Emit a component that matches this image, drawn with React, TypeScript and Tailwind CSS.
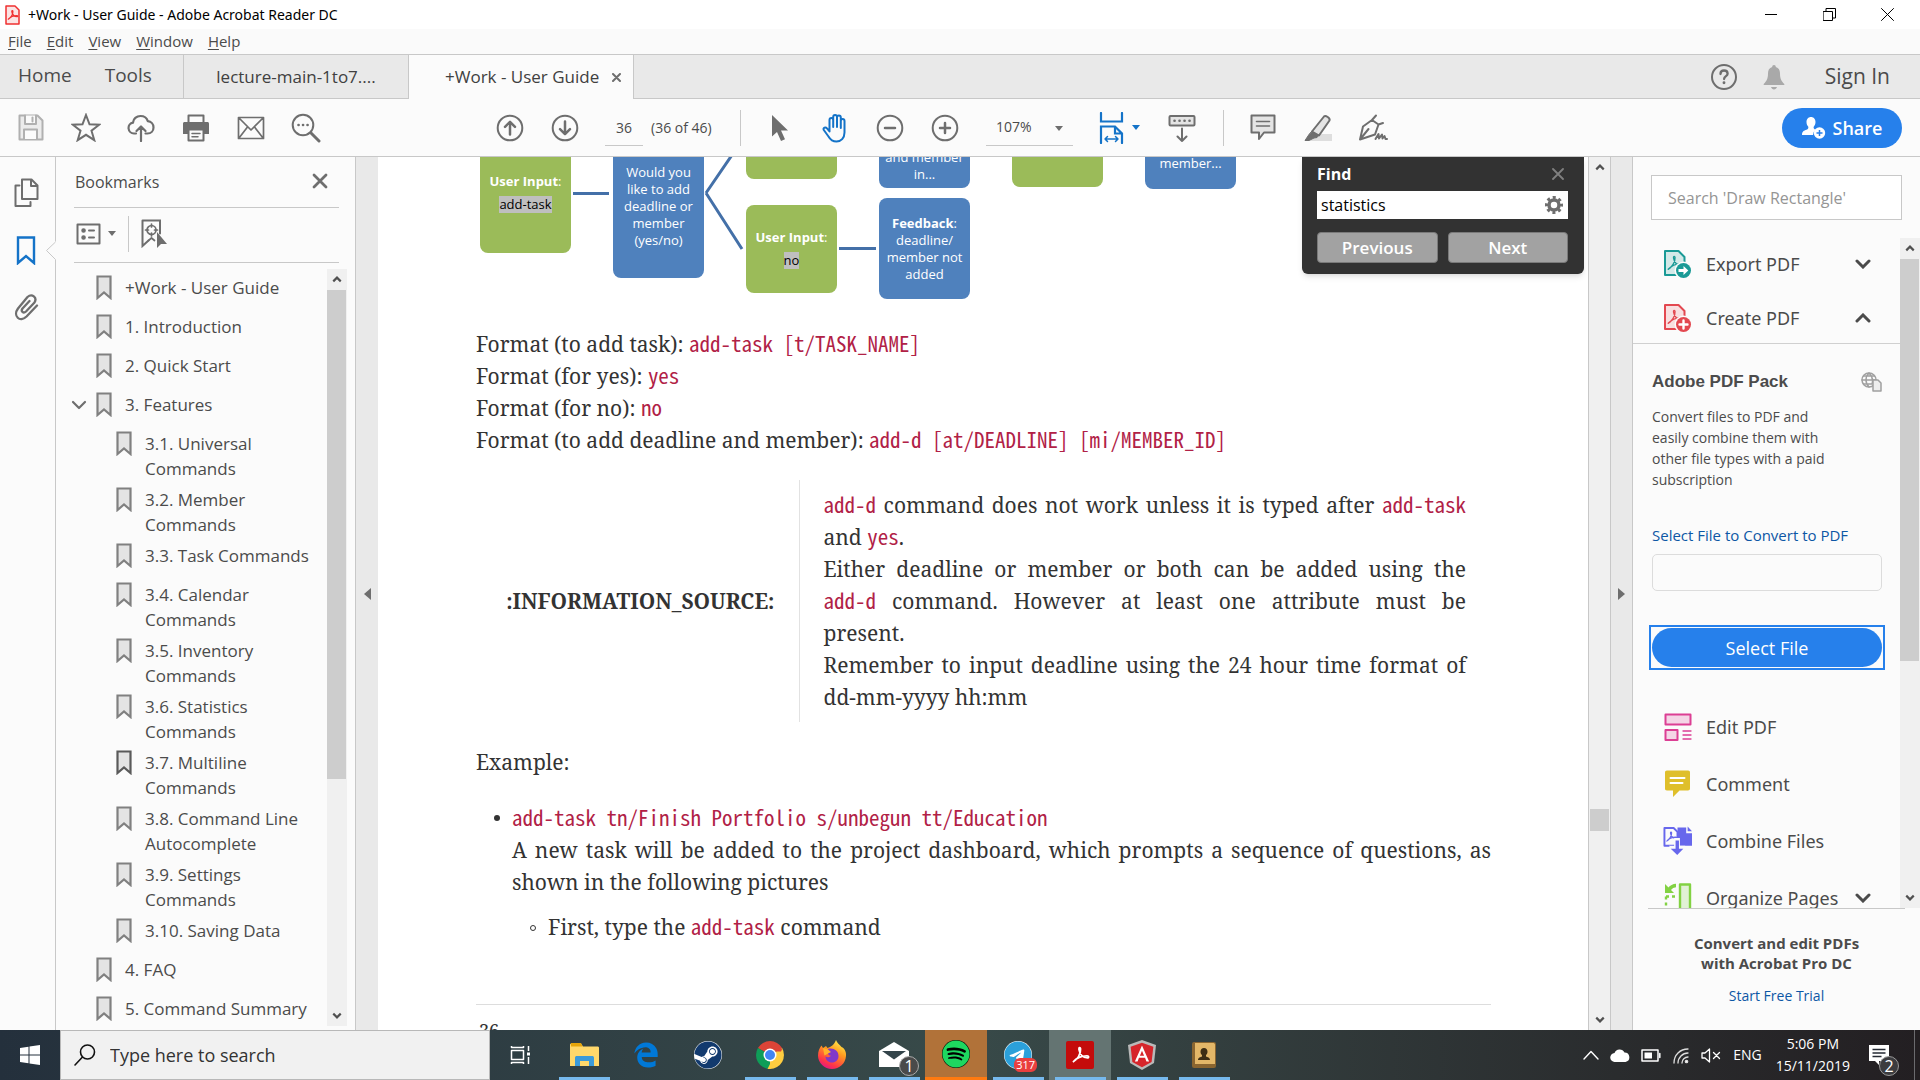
import React from "react";
import { FaAngular, FaEdgeLegacy, FaSpotify, FaSteam, FaTelegram } from "react-icons/fa6";

const G = "#6e6e6e";

type SvgProps = { w: number; h: number; children: React.ReactNode; stroke?: string; sw?: number; className?: string };
function Svg({ w, h, children, stroke = G, sw = 2, className }: SvgProps) {
  return (
    <svg width={w} height={h} viewBox={`0 0 ${w} ${h}`} fill="none" stroke={stroke} strokeWidth={sw} strokeLinejoin="round" strokeLinecap="round" className={className} aria-hidden="true">
      {children}
    </svg>
  );
}

const SWIRL = "M3 17c4-2 8-8 7.6-13-.2-2-2-1.6-1.7.4.8 4.8 4 8.2 8.6 8.4 1.6 0 1.6-1.9-.4-1.9C12 10.9 6.500 13 3 17z";

function Caret({ className = "text-[#6e6e6e]" }: { className?: string }) {
  return (
    <svg width="8" height="5" viewBox="0 0 8 5" fill="currentColor" className={className} aria-hidden="true">
      <path d="M0 0h8L4 5z" />
    </svg>
  );
}

function Chevron({ up = false, small = false }: { up?: boolean; small?: boolean }) {
  const d = up ? "M2 8l6-6 6 6" : "M2 2l6 6 6-6";
  return small ? (
    <svg width="10" height="7" viewBox="0 0 16 10" fill="none" stroke="#505050" strokeWidth="3.400" aria-hidden="true"><path d={d} /></svg>
  ) : (
    <svg width="16" height="10" viewBox="0 0 16 10" fill="none" stroke="#4b4b4b" strokeWidth="3" strokeLinecap="round" aria-hidden="true"><path d={d} /></svg>
  );
}

function IconButton({ label, children }: { label: string; children: React.ReactNode }) {
  return (
    <button aria-label={label} className="flex h-10 w-[55px] shrink-0 items-center justify-center">
      {children}
    </button>
  );
}

function TitleBar() {
  return (
    <header className="flex h-[29px] shrink-0 items-center bg-white">
      <Svg w={16} h={20} stroke="#f03030" sw={1.5} className="ml-1">
        <path d="M2 1h9l4 4v14H2z" fill="#fbe4e4" />
        <g transform="translate(2.5 4) scale(.6)"><path d={SWIRL} strokeWidth="2.200" /></g>
      </Svg>
      <h1 className="ml-2 font-['Noto_Sans'] text-sm text-black">+Work - User Guide - Adobe Acrobat Reader DC</h1>
      <div className="ml-auto flex items-center">
        <button aria-label="Minimize" className="flex h-7 w-[58px] items-center justify-center">
          <Svg w={12} h={12} stroke="#000" sw={1}><path d="M0 5.5h12" /></Svg>
        </button>
        <button aria-label="Restore" className="flex h-7 w-[58px] items-center justify-center">
          <Svg w={13} h={13} stroke="#000" sw={1}><path d="M.5 3.500h9v9h-9zM3 3V.5h9.500V10H10" /></Svg>
        </button>
        <button aria-label="Close" className="mr-1 flex h-7 w-[58px] items-center justify-center">
          <Svg w={13} h={13} stroke="#000" sw={1}><path d="M.5.5l12 12M12.500.5l-12 12" /></Svg>
        </button>
      </div>
    </header>
  );
}

function MenuBar() {
  return (
    <nav className="flex h-[25px] shrink-0 items-center gap-[15px] bg-[#fafafa] pl-2 text-[15px] text-[#4b4b4b]">
      {["File", "Edit", "View", "Window", "Help"].map((m) => (
        <button key={m}>
          <span className="underline underline-offset-2">{m[0]}</span>
          {m.slice(1)}
        </button>
      ))}
    </nav>
  );
}

function TabBar() {
  return (
    <div className="flex h-[45px] shrink-0 border-y border-[#c8c8c8] bg-[#e9e9e9] text-[#4b4b4b]">
      <div className="flex w-[184px] items-center gap-[33px] border-r border-[#c8c8c8] pl-[18px] pb-[2px] text-[19px]">
        <button>Home</button>
        <button>Tools</button>
      </div>
      <button className="w-[225px] border-r border-[#c8c8c8] text-[17px] text-[#404040]">lecture-main-1to7....</button>
      <div className="-mb-px flex w-[225px] items-center border-r border-[#c8c8c8] bg-[#fbfbfb] pl-9 text-[17px] text-[#404040]">
        <button className="whitespace-nowrap">+Work - User Guide</button>
        <button aria-label="Close tab" className="ml-auto mr-3">
          <Svg w={9} h={9} sw={2}><path d="M1 1l7 7M8 1L1 8" /></Svg>
        </button>
      </div>
      <div className="ml-auto flex items-center">
        <button aria-label="Help" className="mr-[25px]">
          <Svg w={28} h={28}>
            <circle cx="14" cy="14" r="12" />
            <path d="M10.500 11c0-2.200 1.500-3.500 3.500-3.500s3.600 1.200 3.600 3.200c0 2.300-3.500 2.500-3.500 5.300" strokeWidth="2.300" />
            <circle cx="14" cy="19.800" r=".7" strokeWidth="1.500" fill={G} />
          </Svg>
        </button>
        <button aria-label="Notifications" className="mr-10">
          <svg width="22" height="26" viewBox="0 0 22 26" fill="#a9a9a9" aria-hidden="true">
            <path d="M11 1c1.200 0 1.800.8 1.800 2 3 .8 4.200 3.300 4.200 6.500 0 5 1.300 7.500 4.300 10.500v1H.7v-1C3.700 17 5 14.500 5 9.500 5 6.300 6.200 3.800 9.200 3c0-1.200.6-2 1.800-2zM8 23h6c-.5 1.600-1.600 2.500-3 2.500S8.500 24.600 8 23z" />
          </svg>
        </button>
        <button className="mr-[30px] text-[21px]">Sign In</button>
      </div>
    </div>
  );
}

function Toolbar() {
  return (
    <div className="flex h-[58px] shrink-0 items-center border-b border-[#c8c8c8] bg-[#fbfbfb] pl-[3px] text-sm text-[#4b4b4b]">
      <IconButton label="Save">
        <Svg w={26} h={27} stroke="#b0b0b0"><path d="M1.500 1.500h18l5 5v19h-23z" fill="#ececec" /><path d="M7 1.500v8.500h11V1.500M6 25v-9.500h13V25" fill="#fbfbfb" /><path d="M14.500 3.500v4" /></Svg>
      </IconButton>
      <IconButton label="Star">
        <Svg w={30} h={29}><path d="M15 2l3.500 9.300 9.700.4-7.700 6 2.800 9.500L15 21.800l-8.300 5.400 2.800-9.500-7.700-6 9.700-.4z" strokeLinejoin="miter" /></Svg>
      </IconButton>
      <IconButton label="Upload to cloud">
        <Svg w={28} h={28} sw={2.200}><path d="M9 19.500H7a5.500 5.500 0 0 1-1-10.900C6.200 4.800 9.500 2 13.500 2c3.500 0 6.300 2 7.300 5.200 3.400.4 5.700 3 5.700 6.200 0 3.500-2.500 6.100-6 6.100h-2M14 27V13M9.500 17l4.500-4.500 4.500 4.500" /></Svg>
      </IconButton>
      <IconButton label="Print">
        <Svg w={28} h={28}><path d="M6.500 9V1.500h15V9" /><path d="M1 9.500c0-1 .8-1.500 1.500-1.500h23c.8 0 1.500.6 1.500 1.500V20H1z" fill={G} stroke="none" /><path d="M6.500 15.500h15v11h-15z" fill="#fbfbfb" /><path d="M10 19.500h8M10 22.800h6" strokeWidth="1.500" /></Svg>
      </IconButton>
      <IconButton label="Email">
        <Svg w={28} h={24}><path d="M1.500 1.500h25v21h-25zM2 2l12 12L26 2M2 22l8.500-11M26 22l-8.500-11" strokeWidth="1.700" /></Svg>
      </IconButton>
      <IconButton label="Find">
        <Svg w={30} h={30}><circle cx="12" cy="12" r="10.300" /><path d="M20 20l8 8" strokeWidth="3" /><path d="M7.500 12h.1M12 12h.1M16.500 12h.1" strokeWidth="2.600" /></Svg>
      </IconButton>
      <div className="ml-[149px] flex">
        <IconButton label="Previous page">
          <Svg w={28} h={28}><circle cx="14" cy="14" r="12.300" /><path d="M14 20.500V8M9 12.800L14 7.800l5 5" strokeWidth="2.500" /></Svg>
        </IconButton>
        <IconButton label="Next page">
          <Svg w={28} h={28}><circle cx="14" cy="14" r="12.300" /><path d="M14 7.500V20M9 15.200l5 5 5-5" strokeWidth="2.500" /></Svg>
        </IconButton>
      </div>
      <input aria-label="Page number" defaultValue="36" className="ml-[13px] h-9 w-[38px] border-b border-[#c8c8c8] bg-transparent text-center" />
      <span className="ml-2 w-[89px] whitespace-nowrap">(36 of 46)</span>
      <div className="h-9 w-px bg-[#c8c8c8]" />
      <div className="ml-[11px] flex">
        <IconButton label="Select tool">
          <Svg w={18} h={26} stroke="none"><path d="M1 0v21.500l5-4.500 4 9 4-1.800-4-8.700h7z" fill={G} /></Svg>
        </IconButton>
        <IconButton label="Hand tool">
          <Svg w={28} h={30} stroke="#1473c8" sw={2}><path d="M7.500 16V7c0-2.800 3.700-2.800 3.700 0v7V4c0-2.800 3.800-2.800 3.800 0v10V4.500c0-2.800 3.800-2.800 3.800 0V15 8c0-2.800 3.700-2.800 3.700 0v11.500c0 5.500-3.500 9-8 9-4 0-6-1.500-8-5L1.800 17c-1-2.200 1.700-3.500 3.200-1.600l2.500 3z" transform="translate(1 0)" /></Svg>
        </IconButton>
        <IconButton label="Zoom out">
          <Svg w={28} h={28}><circle cx="14" cy="14" r="12.300" /><path d="M9 14h10" strokeWidth="2.500" /></Svg>
        </IconButton>
        <IconButton label="Zoom in">
          <Svg w={28} h={28}><circle cx="14" cy="14" r="12.300" /><path d="M9 14h10M14 9v10" strokeWidth="2.500" /></Svg>
        </IconButton>
      </div>
      <div className="relative ml-[14px]">
        <select aria-label="Zoom level" className="h-9 w-[87px] appearance-none border-b border-[#c8c8c8] bg-transparent pl-[10px]">
          <option>107%</option>
        </select>
        <Caret className="pointer-events-none absolute right-[10px] top-4 text-[#6e6e6e]" />
      </div>
      <button aria-label="Fit width" className="ml-[25px] flex h-10 w-[42px] items-center justify-between">
        <Svg w={28} h={32} stroke="#1473c8" sw={2.200}><path d="M3 1v8.500h21V1M3 31V14.500h14l7 7V31M17 14.500v7h7" strokeLinejoin="miter" /><path d="M7 27h13M9.500 24.500L7 27l2.500 2.500M17.500 24.500L20 27l-2.500 2.500" strokeWidth="1.500" /></Svg>
        <Caret className="text-[#1473c8]" />
      </button>
      <div className="mx-[14px]">
        <IconButton label="Scrolling">
          <Svg w={28} h={28}><rect x="1.500" y="2" width="25" height="9.500" rx="1" fill="#e4e4e4" /><path d="M6.500 6.700h.1M11.500 6.700h.1M16.500 6.700h.1M21.500 6.700h.1" strokeWidth="2.600" /><path d="M14 14.500V27M9.500 22.500L14 27l4.500-4.500" /></Svg>
        </IconButton>
      </div>
      <div className="h-9 w-px bg-[#c8c8c8]" />
      <div className="ml-[11px] flex">
        <IconButton label="Add comment">
          <Svg w={26} h={27}><path d="M1.500 1.500h23v17H14l-5 6.500v-6.500H1.500z" fill="#e4e4e4" /><path d="M6.500 7.500h13M6.500 12h13" strokeWidth="1.600" /></Svg>
        </IconButton>
        <IconButton label="Highlight">
          <Svg w={30} h={28}><path d="M9 20h20v7H7z" fill="#dedede" stroke="none" /><path d="M9 17.500L21 2.500c1.500-1.500 6.500 1.500 5.500 4L16 21.500z" fill="#e4e4e4" /><path d="M9 17.500l6.500 4-1.500 2-3 .5-5 2.500H2l4-6z" fill={G} strokeWidth="1" /></Svg>
        </IconButton>
        <IconButton label="Sign">
          <Svg w={30} h={28}><path d="M2 25.500l3-13 9-6.500 6.500 4.500L17 20.500zM14 6l4-4.500M20.500 10.500l4.500-1.500M2 25.500L10.500 15M17.500 25l3-5 .5 4.500 3-4 .5 4 2-2.500 1 3h1.500" /></Svg>
        </IconButton>
      </div>
      <button className="ml-auto mr-[18px] flex h-10 w-[120px] items-center justify-center gap-[7px] rounded-full bg-[#2680eb] text-lg font-semibold text-white">
        <svg width="24" height="22" viewBox="0 0 24 22" aria-hidden="true">
          <path d="M9 0c2.800 0 4.500 2.200 4.500 5 0 2-.8 3.600-1.800 4.700-.4 1.500.3 2.300 2 3A6.500 6.500 0 0 0 11 18H0c0-3.500 2-4.600 4.500-5.300 1.700-.5 2-1.600 1.800-3C5.200 8.600 4.500 7 4.500 5 4.500 2.200 6.200 0 9 0z" fill="#fff" />
          <circle cx="17.500" cy="16" r="5.700" fill="#fff" />
          <path d="M17.500 13v6M14.500 16h6" stroke="#2680eb" strokeWidth="1.500" />
        </svg>
        Share
      </button>
    </div>
  );
}

function BookmarkIcon({ dark = false }: { dark?: boolean }) {
  return (
    <Svg w={16} h={25} stroke={dark ? "#5a5a5a" : "#808080"} sw={2.200} className="shrink-0">
      <path d="M1.500 1.500h13V23L8 17.500 1.500 23z" fill="#e4e4e4" strokeLinejoin="miter" />
    </Svg>
  );
}

const BOOKMARKS: { text: string; lvl?: number; open?: boolean; dark?: boolean }[] = [
  { text: "+Work - User Guide" },
  { text: "1. Introduction" },
  { text: "2. Quick Start" },
  { text: "3. Features", open: true },
  { text: "3.1. Universal Commands", lvl: 1 },
  { text: "3.2. Member Commands", lvl: 1 },
  { text: "3.3. Task Commands", lvl: 1 },
  { text: "3.4. Calendar Commands", lvl: 1 },
  { text: "3.5. Inventory Commands", lvl: 1 },
  { text: "3.6. Statistics Commands", lvl: 1 },
  { text: "3.7. Multiline Commands", lvl: 1, dark: true },
  { text: "3.8. Command Line Autocomplete", lvl: 1 },
  { text: "3.9. Settings Commands", lvl: 1 },
  { text: "3.10. Saving Data", lvl: 1 },
  { text: "4. FAQ" },
  { text: "5. Command Summary" },
];

function ScrollArrow({ up = false }: { up?: boolean }) {
  return (
    <button aria-label={up ? "Scroll up" : "Scroll down"} className="flex h-[21px] w-full shrink-0 items-center justify-center">
      <Chevron up={up} small />
    </button>
  );
}

function LeftRail() {
  return (
    <aside className="relative flex w-14 shrink-0 flex-col items-center gap-7 border-r border-[#c8c8c8] bg-[#fbfbfb] pr-[3px] pt-[21px]">
      <button aria-label="Page thumbnails">
        <Svg w={26} h={30}><path d="M6.500 7.500H2.500V28h15v-4" /><path d="M9 1.500h9.500l6 6v13.500H9z" fill="#fbfbfb" /><path d="M18 2v6h6" /></Svg>
      </button>
      <button aria-label="Bookmarks panel">
        <Svg w={20} h={29} stroke="#1473c8" sw={2.400}><path d="M2 1.500h16V27l-8-7-8 7z" strokeLinejoin="miter" /></Svg>
      </button>
      <button aria-label="Attachments">
        <Svg w={26} h={28} sw={2.300}><path d="M24 12.500L13.500 23.500c-6.500 6.500-14-.5-8.500-8L14.500 4c4.500-4 10 .5 7 5.500L13 18.500c-2.700 2.500-5.500-.3-3.500-3l7-7.500" /></Svg>
      </button>
      <svg width="11" height="20" viewBox="0 0 11 20" className="absolute -right-px top-[84px]" aria-hidden="true">
        <path d="M11 0L1.500 9.500 11 19z" fill="#fbfbfb" /><path d="M10.500 1L1.500 9.500l9 9" fill="none" stroke="#c8c8c8" />
      </svg>
    </aside>
  );
}

function BookmarksPanel() {
  return (
    <section className="flex w-[300px] shrink-0 flex-col border-r border-[#c8c8c8] bg-[#fbfbfb] pl-[18px] text-[#4b4b4b]">
      <div className="mr-4 flex h-[51px] shrink-0 items-center border-b border-[#c8c8c8] pl-px">
        <h2 className="text-base">Bookmarks</h2>
        <button aria-label="Close bookmarks" className="mb-[3px] ml-auto mr-[11px]">
          <Svg w={16} h={16} sw={2.800}><path d="M2 2l12 12M14 2L2 14" /></Svg>
        </button>
      </div>
      <div className="mr-4 flex h-[55px] shrink-0 items-center border-b border-[#c8c8c8] pb-[3px] pl-0.5">
        <button aria-label="Options" className="flex items-center gap-[7px]">
          <Svg w={25} h={22}><path d="M1.500 1.500h22v19h-22z" /><path d="M7.500 7.500h.1M7.500 14.500h.1" strokeWidth="4.500" /><path d="M13 7.500h5M13 14.500h5" /></Svg>
          <Caret />
        </button>
        <div className="ml-3 h-9 w-px bg-[#c8c8c8]" />
        <button aria-label="Find current bookmark" className="ml-3">
          <Svg w={26} h={29}><path d="M1.500 1.500h17.500v13M1.500 1.500V27l6-5.500" strokeLinejoin="miter" /><circle cx="10.500" cy="11" r="4.500" strokeWidth="1.700" /><path d="M10.500 5v3M10.500 14v3M4.500 11h3M13.500 11h3M7.500 21.500L10.500 19l3 2.500" strokeWidth="1.700" /><path d="M16 13v16l4-4h6z" fill={G} stroke="none" /></Svg>
        </button>
      </div>
      <div className="mb-1 mt-[6px] flex min-h-0 flex-1">
        <ul className="-ml-1 flex-1 overflow-hidden pl-2 pt-[3px]">
          {BOOKMARKS.map((b) => (
            <li key={b.text} className={`flex min-h-[39px] py-[3px] ${b.lvl ? "pl-[38px]" : b.open ? "" : "pl-[18px]"}`}>
              {b.open && (
                <button aria-label="Collapse" className="-ml-[7px] mr-[7px] mt-2 self-start">
                  <Svg w={18} h={12} sw={2.200}><path d="M2 2l6 6 6-6" /></Svg>
                </button>
              )}
              <BookmarkIcon dark={b.dark} />
              <a href="#bookmark" className={`ml-[13px] text-[17px] leading-[25px] ${b.lvl ? "w-[166px]" : "whitespace-nowrap"}`}>{b.text}</a>
            </li>
          ))}
        </ul>
        <div className="mr-2 flex w-5 shrink-0 flex-col bg-[#f0f0f0]">
          <ScrollArrow up />
          <div className="mr-px flex-[489] bg-[#cdcdcd]" />
          <div className="flex-[226]" />
          <ScrollArrow />
        </div>
      </div>
    </section>
  );
}

const node = "absolute flex w-[91px] flex-col items-center rounded-lg text-center text-[13px] leading-[17px] text-white ";
const green = "bg-[#9bbb59] ";
const blue = "bg-[#4f81bd] ";

function Flow() {
  return (
    <div className="relative h-[171px] font-['Open_Sans']">
      <svg width="500" height="171" className="absolute left-0 top-0" stroke="#4470a8" strokeWidth="3" aria-hidden="true">
        <path d="M97 36.500h36M363 91.500h37M230 36l26-38M230 36l36 56" fill="none" />
      </svg>
      <div className={node + green + "left-1 -top-5 h-[116px] pt-9"}>
        <p><b>User Input</b>:</p>
        <span className="mt-1.5 bg-[#bfbfbf] text-black">add-task</span>
      </div>
      <div className={node + blue + "left-[137px] -top-5 h-[141px] px-2 pt-[27px]"}>Would you like to add deadline or member (yes/no)</div>
      <div className={node + green + "left-[270px] -top-10 h-[62px]"} />
      <div className={node + green + "left-[270px] top-12 h-[88px] pt-6"}>
        <p><b>User Input</b>:</p>
        <span className="mt-1.5 bg-[#bfbfbf] text-black">no</span>
      </div>
      <div className={node + blue + "-top-10 left-[403px] h-[71px] justify-end px-1 pb-[5px]"}>and member in...</div>
      <div className={node + blue + "left-[403px] top-[41px] h-[101px] pt-[17px]"}>
        <p><b>Feedback</b>:<br />deadline/<br />member not<br />added</p>
      </div>
      <div className={node + green + "-top-10 left-[536px] h-[70px]"} />
      <div className={node + blue + "-top-10 left-[669px] h-[72px] justify-end pb-[17px]"}>member...</div>
    </div>
  );
}

function C({ children }: { children: React.ReactNode }) {
  return <code className="font-['Noto_Sans_Mono_CJK_JP','Liberation_Mono',monospace] text-[21px] leading-none whitespace-nowrap text-[#b12146]">{children}</code>;
}

function DocumentPage() {
  return (
    <main className="min-w-0 flex-1 overflow-hidden bg-white pl-[98px] pr-[97px] font-['Noto_Serif','Liberation_Serif',serif] text-[21px] leading-8 text-[#333]">
      <Flow />
      <p className="whitespace-nowrap">Format (to add task): <C>add-task [t/TASK_NAME]</C></p>
      <p>Format (for yes): <C>yes</C></p>
      <p>Format (for no): <C>no</C></p>
      <p className="whitespace-nowrap">Format (to add deadline and member): <C>add-d [at/DEADLINE] [mi/MEMBER_ID]</C></p>
      <table className="mt-6 w-full">
        <tbody>
          <tr>
            <th scope="row" className="w-[323px] border-r border-[#e2e2e2] pr-6 text-right font-bold">:INFORMATION_SOURCE:</th>
            <td className="py-[9px] pl-6 pr-[25px] text-justify">
              <p><C>add-d</C> command does not work unless it is typed after <C>add-task</C> and <C>yes</C>.</p>
              <p>Either deadline or member or both can be added using the <C>add-d</C> command. However at least one attribute must be present.</p>
              <p>Remember to input deadline using the 24 hour time format of <span className="whitespace-nowrap">dd-mm-yyyy hh:mm</span></p>
            </td>
          </tr>
        </tbody>
      </table>
      <p className="mt-6">Example:</p>
      <ul className="mt-6 pl-9">
        <li className="relative text-justify">
          <span className="absolute -left-[18px] top-[13px] size-[6px] rounded-full bg-[#333]" />
          <p><C>add-task tn/Finish Portfolio s/unbegun tt/Education</C></p>
          <p>A new task will be added to the project dashboard, which prompts a sequence of questions, as shown in the following pictures</p>
          <ul className="mt-[13px] pl-9">
            <li className="relative">
              <span className="absolute -left-[18px] top-[14px] size-[6px] rounded-full border border-[#333]" />
              First, type the <C>add-task</C> command
            </li>
          </ul>
        </li>
      </ul>
      <footer className="mt-[61px] border-t border-[#ddd] pl-[3px] pt-[9px] text-lg leading-8">36</footer>
    </main>
  );
}

function FindPanel() {
  return (
    <form className="absolute right-[27px] top-0 flex w-[282px] flex-col rounded-b-md bg-[#323232] pb-[11px] pl-[15px] pr-4 text-base text-white shadow-md" onSubmit={(e) => e.preventDefault()}>
      <div className="flex h-[34px] items-center pb-px">
        <label htmlFor="find" className="font-bold">Find</label>
        <button type="button" aria-label="Close find" className="ml-auto mr-1">
          <Svg w={12} h={12} stroke="#808080" sw={1.800}><path d="M1 1l10 10M11 1L1 11" /></Svg>
        </button>
      </div>
      <div className="flex h-7 items-center bg-white">
        <input id="find" defaultValue="statistics" className="min-w-0 flex-1 bg-white pl-1 text-base text-black" />
        <button type="button" aria-label="Find settings" className="mr-[5px]">
          <svg width="18" height="18" viewBox="0 0 18 18" aria-hidden="true">
            <circle cx="9" cy="9" r="5" fill="none" stroke={G} strokeWidth="3.500" />
            <circle cx="9" cy="9" r="7.500" fill="none" stroke={G} strokeWidth="3" strokeDasharray="3 2.890" strokeDashoffset="1.500" />
          </svg>
        </button>
      </div>
      <div className="mt-[13px] flex gap-[10px] text-[17px] font-semibold">
        <button type="button" className="h-[31px] flex-1 rounded border border-[#7a7a7a] bg-[#a2a2a2]">Previous</button>
        <button type="button" className="h-[31px] flex-1 rounded border border-[#7a7a7a] bg-[#a2a2a2]">Next</button>
      </div>
    </form>
  );
}

function PdfDocIcon({ color, tint, kind }: { color: string; tint: string; kind: "arrow" | "plus" }) {
  return (
    <Svg w={29} h={30} stroke={color}>
      <path d="M2 2h13.500l6 6v18H2z" fill={tint} />
      <g transform="translate(2.500 5) scale(.9)"><path d={SWIRL} strokeWidth="1.500" /></g>
      <circle cx="20.500" cy="21.500" r="9" fill="#fbfbfb" stroke="none" />
      <circle cx="20.500" cy="21.500" r="7.500" fill={color} stroke="none" />
      {kind === "plus" ? <path d="M16.500 21.500h8M20.500 17.500v8" stroke="#fff" strokeWidth="2.400" /> : <path d="M15.500 20h5v-3l4.800 4.500-4.800 4.500v-3h-5z" fill="#fff" stroke="none" />}
    </Svg>
  );
}

function ToolRow({ icon, label, open, className }: { icon: React.ReactNode; label: string; open?: boolean; className: string }) {
  return (
    <button className={`flex w-full shrink-0 items-center pl-[30px] pr-[29px] text-left font-['Noto_Sans'] text-lg ${className}`}>
      <span className="mr-[14px] flex w-[29px] justify-center">{icon}</span>
      {label}
      {open !== undefined && <span className="ml-auto"><Chevron up={open} /></span>}
    </button>
  );
}

function RightPanel() {
  return (
    <aside className="flex w-[287px] shrink-0 flex-col bg-[#fbfbfb] text-[#4b4b4b]">
      <input aria-label="Search tools" placeholder="Search 'Draw Rectangle'" className="ml-[18px] mr-[18px] mt-[18px] h-[45px] shrink-0 border border-[#c8c8c8] bg-white px-4 text-base placeholder:text-[#959595]" />
      <div className="mt-[18px] flex min-h-0 flex-1">
        <div className="min-w-0 flex-1 overflow-hidden">
          <ToolRow className="h-[54px] pb-[2px]" open={false} label="Export PDF" icon={<PdfDocIcon color="#1a9a96" tint="#d3e9e8" kind="arrow" />} />
          <ToolRow className="h-[52px] border-b border-[#d0d0d0]" open label="Create PDF" icon={<PdfDocIcon color="#e34850" tint="#f8dfe0" kind="plus" />} />
          <div className="pl-[19px] pr-[18px] pt-7">
            <div className="flex items-center justify-between">
              <h2 className="font-['Liberation_Sans'] text-[17px] leading-5 font-bold">Adobe PDF Pack</h2>
              <Svg w={21} h={20} stroke="#a0a0a0" sw={1.500}>
                <circle cx="8" cy="8" r="7" /><path d="M1 8h14M2.500 4h11M2.500 12h8M8 1c-4 4-4 10 0 14M8 1c4 4 4 8 3 11" />
                <path d="M12 8h5l3 3v8h-8z" fill="#eee" />
              </Svg>
            </div>
            <p className="mt-[14px] text-sm leading-[21px]">Convert files to PDF and<br />easily combine them with<br />other file types with a paid<br />subscription</p>
            <label htmlFor="file" className="mt-[35px] block text-[15px] leading-[21px] whitespace-nowrap text-[#0d57a5]">Select File to Convert to PDF</label>
            <input id="file" readOnly className="mt-2 h-[37px] w-full rounded-[5px] border border-[#dcdcdc] bg-[#fbfbfb]" />
          </div>
          <div className="ml-4 mr-[15px] mt-[34px] border-2 border-[#2680eb] p-px">
            <button className="h-[39px] w-full rounded-full bg-[#2680eb] text-lg text-white">Select File</button>
          </div>
          <div className="mt-7">
            <ToolRow className="h-[57px]" label="Edit PDF" icon={
              <Svg w={28} h={28} stroke="#dc3f94"><path d="M1.500 1.500h25v10h-25zM1.500 17h12v10h-12z" fill="#f4d5e6" /><path d="M19 18h8M19 22h8M19 26h8" strokeWidth="1.300" /></Svg>} />
            <ToolRow className="h-[57px]" label="Comment" icon={
              <Svg w={27} h={27} stroke="none"><path d="M3 .5h21c1.500 0 2 .8 2 2v16c0 1.300-.7 2-2 2h-8.500L9 27v-6.500H3c-1.500 0-2-.8-2-2v-16c0-1.200.6-2 2-2z" fill="#dfbf2b" /><path d="M6.500 8h14M6.500 13h12" stroke="#fff" strokeWidth="2" /></Svg>} />
            <ToolRow className="h-[57px]" label="Combine Files" icon={
              <Svg w={30} h={30} stroke="#6767ec"><path d="M15 1h9v6h6v13H15z" fill="#6767ec" stroke="none" /><path d="M25.500 0l4.500 5h-4.500z" fill="#6767ec" stroke="none" /><path d="M1.500 1.500H11l4 4V20H1.500z" fill="#fbfbfb" /><g transform="translate(2 4) scale(.65)"><path d={SWIRL} strokeWidth="2" /></g><path d="M11.500 12h6v8h5.500l-8.500 10L6 20h5.500z" fill="#fbfbfb" stroke="none" /><path d="M13 14.500h3.500V23h4.500l-6.300 6.500L8 23h5z" fill="#6767ec" stroke="none" /></Svg>} />
            <ToolRow className="h-[57px]" open={false} label="Organize Pages" icon={
              <Svg w={28} h={29} stroke="#82d243"><path d="M16 1.500h10v26H16z" fill="#e1f1d5" strokeWidth="2.400" /><path d="M2 13.500h10M2 13.500v14M2 27h10" strokeDasharray="3 3" strokeLinecap="butt" strokeWidth="2.400" /><path d="M12 2.500c-3 0-5 1.500-7 4" strokeWidth="3.500" strokeLinecap="butt" /><path d="M1 1v9h9z" fill="#82d243" stroke="none" /></Svg>} />
          </div>
        </div>
        <div className="flex w-5 shrink-0 flex-col bg-[#f0f0f0]">
          <ScrollArrow up />
          <div className="mr-px flex-[402] bg-[#cdcdcd]" />
          <div className="flex-[226]" />
          <ScrollArrow />
        </div>
      </div>
      <div className="mx-[15px] h-[122px] shrink-0 border-t border-[#c8c8c8] pt-[24px] text-center">
        <p className="text-[15px] leading-5 font-bold">Convert and edit PDFs<br />with Acrobat Pro DC</p>
        <a href="#trial" className="mt-[13px] block text-sm leading-5 text-[#0d57a5]">Start Free Trial</a>
      </div>
    </aside>
  );
}

function TaskItem({ label, bar = true, className = "", children }: { label: string; bar?: boolean; className?: string; children: React.ReactNode }) {
  return (
    <button aria-label={label} className={`relative flex h-full w-[62px] shrink-0 items-center justify-center ${className}`}>
      {children}
      {bar && <span className="absolute bottom-0 h-[3px] w-[51px] bg-[#76b9ed]" />}
    </button>
  );
}

function Taskbar() {
  return (
    <footer className="flex h-[50px] shrink-0 items-center bg-linear-to-r from-[#24303c] via-[#384a49] via-50% to-[#231f22] text-white">
      <button aria-label="Start" className="flex h-full w-[60px] items-center justify-center">
        <svg width="20" height="20" viewBox="0 0 20 20" fill="#fff" aria-hidden="true"><path d="M0 3l8.500-1.200v7.700H0zM9.500 1.600L20 0v9.500H9.500zM0 10.500h8.500v7.700L0 17zM9.500 10.500H20V20L9.500 18.400z" /></svg>
      </button>
      <label className="mr-px flex h-full w-[430px] items-center border border-[#b8b8b8] bg-[#f1f1f1]">
        <Svg w={24} h={24} stroke="#111" sw={1.600} className="ml-3"><circle cx="14.500" cy="9" r="7" /><path d="M9.500 14L2 22" /></Svg>
        <input aria-label="Type here to search" placeholder="Type here to search" className="ml-[13px] w-72 bg-transparent text-lg placeholder:text-[#333]" />
      </label>
      <TaskItem label="Task view" bar={false}>
        <Svg w={22} h={20} stroke="#fff" sw={1.500} className="mr-0.5"><path d="M1.500 5.500h12v9h-12zM1.500 1v1.500h12V1M1.500 19v-1.500h12V19M18.500 1v5M18.500 12v7" strokeLinecap="butt" /><path d="M17 7.500h3v3h-3z" fill="#fff" stroke="none" /></Svg>
      </TaskItem>
      <TaskItem label="File Explorer">
        <svg width="29" height="24" viewBox="0 0 29 24" aria-hidden="true"><path d="M0 2c0-1 .5-1.500 1.500-1.500H11l2 3h14.500c1 0 1.500.5 1.500 1.500v18H0z" fill="#ffd86b" /><path d="M1 0h10l1.500 3.500H1z" fill="#e5a50a" /><path d="M5 23v-8c0-1.500.7-2 2-2h15c1.300 0 2 .5 2 2v8h-5v-5h-9v5z" fill="#3b9ad9" /></svg>
      </TaskItem>
      <TaskItem label="Edge" bar={false}><FaEdgeLegacy size={26} color="#0078d7" /></TaskItem>
      <TaskItem label="Steam" bar={false}>
        <span className="rounded-full bg-white"><FaSteam size={28} color="#123a6e" /></span>
      </TaskItem>
      <TaskItem label="Chrome">
        <svg width="28" height="28" viewBox="0 0 28 28" aria-hidden="true">
          <path d="M14 14L1.900 7A14 14 0 0 1 26.100 7z" fill="#db4437" /><path d="M14 14L26.100 7A14 14 0 0 1 14 28z" fill="#ffcd40" /><path d="M14 14v14A14 14 0 0 1 1.900 7z" fill="#0f9d58" />
          <path d="M14 7.500h12.300l-1.200 3H14z" fill="#db4437" /><path d="M19.600 17.300L14 28h-2.500l4-8z" fill="#ffcd40" />
          <circle cx="14" cy="14" r="6.500" fill="#fff" /><circle cx="14" cy="14" r="5" fill="#4285f4" />
        </svg>
      </TaskItem>
      <TaskItem label="Firefox">
        <svg width="30" height="30" viewBox="0 0 30 30" aria-hidden="true">
          <defs><linearGradient id="ff" x1=".8" y1="0" x2=".3" y2="1"><stop offset="0" stopColor="#fff44f" /><stop offset=".4" stopColor="#ff9a1f" /><stop offset=".8" stopColor="#ff3647" /><stop offset="1" stopColor="#e31587" /></linearGradient></defs>
          <path d="M19 0c1 3 3.500 4.500 5.500 7 3 1 5 5 4.500 9-.6 7.500-6.500 13-14 13S1 23 1 15.500C1 11 2.500 8 4.500 5.500L6 8l3-2 1.500 2C14 7 17 5 19 0z" fill="url(#ff)" />
          <path d="M11 9c5-1.500 10.500 1.500 10.500 7 0 4-3 6.500-6.500 6.500S8.500 20 8.500 16.500c2 1.500 4.500.5 5.500-.8-2.500-.2-3-1.700-3-3z" fill="#8038c8" /><path d="M6 8l5 1.500 3 2.500-3 1.500-3.500 2z" fill="#ffb42a" />
        </svg>
      </TaskItem>
      <TaskItem label="Mail">
        <svg width="30" height="26" viewBox="0 0 30 26" aria-hidden="true"><path d="M15 0l15 9v16H0V9z" fill="#fff" /><path d="M3 9h24l-12 8.500z" fill="#33444a" /></svg>
        <span className="absolute bottom-1 right-1.5 flex size-5 items-center justify-center rounded-full border border-[#aaa] bg-[#4a4a4a] text-base leading-none">1</span>
      </TaskItem>
      <TaskItem label="Spotify" bar={false} className="border-b-[3px] border-[#ff7a10] bg-[#b17239]">
        <span className="rounded-full bg-black"><FaSpotify size={28} color="#1ed760" /></span>
      </TaskItem>
      <TaskItem label="Telegram">
        <span className="rounded-full bg-white"><FaTelegram size={28} color="#2ba0da" /></span>
        <span className="absolute bottom-2 right-3 rounded-md bg-[#ea3f3f] px-0.5 text-[11px] leading-[14px]">317</span>
      </TaskItem>
      <TaskItem label="Acrobat Reader" className="bg-[#647472]">
        <span className="flex size-7 items-center justify-center rounded-xs bg-[#c40b0b]"><svg width="21" height="21" viewBox="0 0 21 21" fill="none" stroke="#fff" strokeWidth="1.700" aria-hidden="true"><path d={SWIRL} /></svg></span>
      </TaskItem>
      <TaskItem label="Angular">
        <svg width="30" height="30" viewBox="0 0 30 30" className="absolute" aria-hidden="true"><path d="M15 0l14 5-2 18-12 7-12-7L1 5z" fill="#b9b9b9" /><path d="M8 5h14v18H8z" fill="#fff" /></svg>
        <FaAngular size={28} color="#d6252b" className="relative" />
      </TaskItem>
      <TaskItem label="Contacts">
        <svg width="24" height="26" viewBox="0 0 24 26" aria-hidden="true"><rect width="24" height="26" rx="2" fill="#8a6530" /><path d="M3 1h18c1 0 2 .5 2 1.500V22H3z" fill="#e3b768" /><path d="M12 6c2.200 0 3.500 1.600 3.500 3.700 0 1.500-.7 2.500-1.500 3.300v1.500c1.500.6 4 1 4 3.500H6c0-2.500 2.500-2.900 4-3.500V13c-.8-.8-1.500-1.800-1.500-3.300C8.500 7.600 9.800 6 12 6z" fill="#3e2e14" /></svg>
      </TaskItem>
      <div className="ml-auto flex h-full items-center">
        <div className="flex items-center gap-[11px]">
          <Svg w={16} h={10} stroke="#fff" sw={1.400}><path d="M1 9l7-7.500L15 9" /></Svg>
          <svg width="20" height="14" viewBox="0 0 20 14" fill="#fff" aria-hidden="true"><path d="M5 14a4.500 4.500 0 0 1-.5-9 5.500 5.500 0 0 1 10-.5A4.800 4.800 0 0 1 15.500 14z" /></svg>
          <Svg w={20} h={13} stroke="#fff" sw={1.500}><path d="M1 1h16v11H1zM18.800 4.500v4" /><path d="M3.500 3.500H11v6H3.500z" fill="#fff" stroke="none" /></Svg>
          <Svg w={18} h={17} stroke="#ddd" sw={1.300}><path d="M2 16C2 8 8 2 16 2M6 16C6 10.500 10.500 6 16 6M10 16c0-3.300 2.700-6 6-6" /><circle cx="14.500" cy="14.500" r="1.200" fill="#fff" /></Svg>
          <Svg w={20} h={15} stroke="#fff" sw={1.300}><path d="M1 5h3l4.500-4v13L4 10H1zM12.500 4.500l6 6M18.500 4.500l-6 6" /></Svg>
        </div>
        <span className="ml-3 text-sm">ENG</span>
        <time className="ml-[14px] text-center text-sm leading-[22px]">5:06 PM<br />15/11/2019</time>
        <button aria-label="Notifications" className="relative ml-[19px] mr-[15px] h-full w-[30px]">
          <svg width="20" height="20" viewBox="0 0 20 20" className="absolute left-0 top-[15px]" aria-hidden="true"><path d="M0 0h20v16H10v4l-4-4H0z" fill="#fff" /><path d="M3.500 4.500h13M3.500 8h13M3.500 11.500h9" stroke="#252a33" strokeWidth="1.500" /></svg>
          <span className="absolute left-[10px] top-[26px] flex size-5 items-center justify-center rounded-full border border-[#999] bg-[#3c3c3f] text-base leading-none">2</span>
        </button>
        <div className="mr-[5px] h-full w-px bg-[#6b6b6e]" />
      </div>
    </footer>
  );
}

export default function App() {
  return (
    <div className="flex h-screen flex-col overflow-hidden bg-[#fbfbfb] font-['Open_Sans',sans-serif]">
      <TitleBar />
      <MenuBar />
      <TabBar />
      <Toolbar />
      <div className="flex min-h-0 flex-1">
        <LeftRail />
        <BookmarksPanel />
        <button aria-label="Collapse bookmarks" className="flex w-[22px] shrink-0 items-center justify-center bg-[#e9e9e9]">
          <svg width="7" height="12" viewBox="0 0 7 12" fill={G} aria-hidden="true"><path d="M7 0v12L0 6z" /></svg>
        </button>
        <div className="relative flex min-w-0 flex-1">
          <DocumentPage />
          <FindPanel />
          <div className="flex w-[23px] shrink-0 flex-col border-x border-[#c8c8c8] bg-[#f0f0f0]">
            <ScrollArrow up />
            <div className="flex-[631]" />
            <div className="mx-px h-[22px] bg-[#cdcdcd]" />
            <div className="flex-[178]" />
            <ScrollArrow />
          </div>
        </div>
        <button aria-label="Collapse tools" className="flex w-[22px] shrink-0 items-center justify-center border-r border-[#c8c8c8] bg-[#e9e9e9]">
          <svg width="7" height="12" viewBox="0 0 7 12" fill={G} aria-hidden="true"><path d="M0 0v12l7-6z" /></svg>
        </button>
        <RightPanel />
      </div>
      <Taskbar />
    </div>
  );
}
